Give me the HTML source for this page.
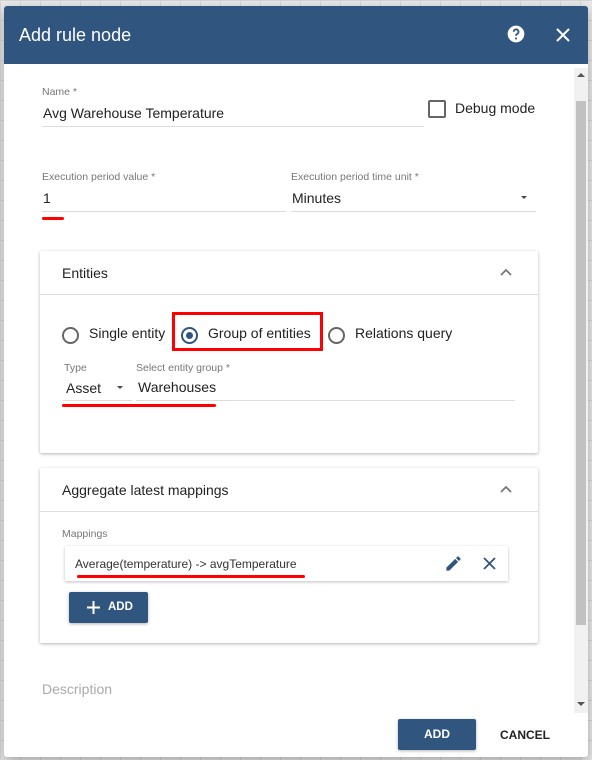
<!DOCTYPE html>
<html><head><style>
*{box-sizing:border-box;margin:0;padding:0}
body{width:592px;height:760px;overflow:hidden;font-family:"Liberation Sans",sans-serif;background:#e9e9e9;
background-image:linear-gradient(#d6d6d6 1px,transparent 1px),linear-gradient(90deg,#d6d6d6 1px,transparent 1px);background-size:20px 20px;position:relative}
.a{position:absolute}
.dlg{left:4px;top:6px;width:584px;height:751px;background:#fff;border-radius:3px;overflow:hidden;box-shadow:0 4px 12px rgba(0,0,0,.3)}
.hd{left:0;top:0;width:584px;height:58px;background:#305680;color:#fff;font-size:18px}
.lbl{font-size:10.5px;color:#777}
.val{font-size:14px;color:#222}
.ul{height:1px;background:#ddd}
.panel{background:#fff;box-shadow:0 1px 3px rgba(0,0,0,.3);border-radius:2px}
.radio{width:17px;height:17px;border:2px solid #666;border-radius:50%}
.red{background:#f00;height:3px;border-radius:2px}
.dd{border:3.5px solid transparent;border-top:3.5px solid #444;border-bottom:0}
</style></head><body>
<div class="a dlg">
 <div class="a hd"><span class="a" style="left:15px;top:19px">Add rule node</span>
  <svg class="a" style="left:502px;top:18px" width="20" height="20" viewBox="0 0 24 24"><circle cx="12" cy="12" r="10" fill="#fff"/><path d="M9.2 9.3a2.9 2.9 0 1 1 4.2 2.6c-.9.5-1.4 1-1.4 2.2" stroke="#305680" stroke-width="2.2" fill="none"/><circle cx="12" cy="17.3" r="1.3" fill="#305680"/></svg>
  <svg class="a" style="left:551px;top:21px" width="16" height="16" viewBox="0 0 16 16"><path d="M2 2L14 14M14 2L2 14" stroke="#fff" stroke-width="2"/></svg>
 </div>
</div>
<div class="a" style="left:574px;top:68px;width:14px;height:645px;background:#f1f1f1"></div>
<div class="a" style="left:576px;top:101px;width:10px;height:524px;background:#c1c1c1"></div>
<div class="a" style="left:577px;top:73px;border:4px solid transparent;border-bottom:4px solid #555;border-top:0"></div>
<div class="a" style="left:577px;top:702px;border:4px solid transparent;border-top:4px solid #555;border-bottom:0"></div>

<div class="a lbl" style="left:42px;top:86px">Name *</div>
<div class="a val" style="left:43px;top:105px">Avg Warehouse Temperature</div>
<div class="a ul" style="left:42px;top:126px;width:382px"></div>
<div class="a" style="left:428px;top:100px;width:18px;height:18px;border:2px solid #666;border-radius:2px"></div>
<div class="a val" style="left:455px;top:100px">Debug mode</div>

<div class="a lbl" style="left:42px;top:171px">Execution period value *</div>
<div class="a val" style="left:43px;top:190px">1</div>
<div class="a ul" style="left:42px;top:211px;width:244px"></div>
<div class="a red" style="left:42px;top:217px;width:22px"></div>
<div class="a lbl" style="left:291px;top:171px">Execution period time unit *</div>
<div class="a val" style="left:292px;top:190px">Minutes</div>
<div class="a dd" style="left:521px;top:196px"></div>
<div class="a ul" style="left:291px;top:211px;width:245px"></div>

<div class="a panel" style="left:40px;top:251px;width:498px;height:202px"></div>
<div class="a val" style="left:62px;top:265px">Entities</div>
<svg class="a" style="left:499px;top:267px" width="14" height="10"><path d="M2 8L7 3L12 8" stroke="#777" stroke-width="1.8" fill="none"/></svg>
<div class="a ul" style="left:40px;top:294px;width:498px"></div>
<div class="a radio" style="left:62px;top:327px"></div>
<div class="a val" style="left:89px;top:325px">Single entity</div>
<div class="a radio" style="left:181px;top:327px;border-color:#305680"></div>
<div class="a" style="left:186px;top:332px;width:7px;height:7px;border-radius:50%;background:#305680"></div>
<div class="a val" style="left:208px;top:325px">Group of entities</div>
<div class="a" style="left:172px;top:312px;width:151px;height:39px;border:3px solid #f00"></div>
<div class="a radio" style="left:328px;top:327px"></div>
<div class="a val" style="left:355px;top:325px">Relations query</div>
<div class="a lbl" style="left:64px;top:362px">Type</div>
<div class="a val" style="left:66px;top:380px">Asset</div>
<div class="a dd" style="left:117px;top:386px"></div>
<div class="a ul" style="left:63px;top:400px;width:69px"></div>
<div class="a lbl" style="left:136px;top:362px">Select entity group *</div>
<div class="a val" style="left:138px;top:379px">Warehouses</div>
<div class="a ul" style="left:136px;top:400px;width:379px"></div>
<div class="a red" style="left:62px;top:404px;width:154px"></div>

<div class="a panel" style="left:40px;top:468px;width:498px;height:175px"></div>
<div class="a val" style="left:62px;top:482px">Aggregate latest mappings</div>
<svg class="a" style="left:499px;top:484px" width="14" height="10"><path d="M2 8L7 3L12 8" stroke="#777" stroke-width="1.8" fill="none"/></svg>
<div class="a ul" style="left:40px;top:511px;width:498px"></div>
<div class="a lbl" style="left:62px;top:528px">Mappings</div>
<div class="a" style="left:65px;top:546px;width:443px;height:35px;background:#fff;box-shadow:0 1px 3px rgba(0,0,0,.25)"></div>
<div class="a" style="left:75px;top:557px;font-size:12px;color:#333">Average(temperature) -&gt; avgTemperature</div>
<div class="a red" style="left:77px;top:575px;width:228px"></div>
<svg class="a" style="left:444px;top:554px" width="19" height="19" viewBox="0 0 24 24"><path d="M3 17.25V21h3.75L17.81 9.94l-3.75-3.75L3 17.25zM20.71 7.04a1 1 0 0 0 0-1.41l-2.34-2.34a1 1 0 0 0-1.41 0l-1.83 1.83 3.75 3.75 1.83-1.83z" fill="#305680"/></svg>
<svg class="a" style="left:483px;top:557px" width="13" height="13"><path d="M1 1L12 12M12 1L1 12" stroke="#305680" stroke-width="1.8"/></svg>
<div class="a" style="left:69px;top:592px;width:79px;height:31px;background:#305680;border-radius:2px;box-shadow:0 1px 3px rgba(0,0,0,.3);color:#fff;font-size:11.5px;font-weight:bold">
 <svg class="a" style="left:18px;top:9px" width="13" height="13"><path d="M6.5 0V13M0 6.5H13" stroke="#fff" stroke-width="2"/></svg>
 <span class="a" style="left:39px;top:9px">ADD</span></div>

<div class="a" style="left:42px;top:681px;font-size:14px;color:#aaa">Description</div>
<div class="a" style="left:398px;top:719px;width:78px;height:31px;background:#305680;border-radius:2px;box-shadow:0 1px 3px rgba(0,0,0,.3);color:#fff;font-size:12px;font-weight:bold;text-align:center;line-height:31px">ADD</div>
<div class="a" style="left:500px;top:728px;font-size:12px;font-weight:bold;color:#222">CANCEL</div>
</body></html>
